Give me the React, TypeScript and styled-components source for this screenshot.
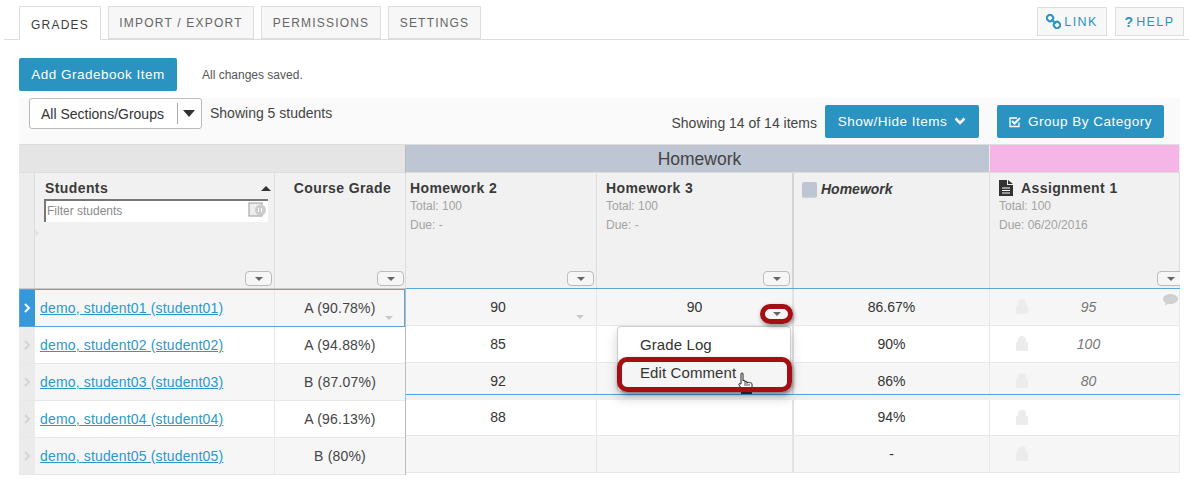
import React from "react";
import styled, { createGlobalStyle } from "styled-components";

const Global = createGlobalStyle`
  html, body { margin: 0; padding: 0; background: #fff; }
  body { font-family: "Liberation Sans", Arial, sans-serif; color: #333; width: 1189px; height: 481px; overflow: hidden; }
`;

const Page = styled.div`
  position: relative;
  width: 1189px;
  height: 481px;
  overflow: hidden;
`;

const TabBar = styled.div`
  height: 33px;
  margin: 6px 0 0 4px;
  padding: 0 5px 0 15px;
  border-bottom: 1px solid #ddd;
  display: flex;
  align-items: flex-start;
  gap: 7px;
`;

const Tab = styled.div<{ $active?: boolean; $w: number }>`
  box-sizing: border-box;
  width: ${(p) => p.$w}px;
  height: ${(p) => (p.$active ? 34 : 33)}px;
  border: 1px solid #ddd;
  border-bottom: ${(p) => (p.$active ? "none" : "1px solid #ddd")};
  background: ${(p) => (p.$active ? "#fff" : "#f7f7f7")};
  color: ${(p) => (p.$active ? "#3d3d3d" : "#666")};
  font-size: 12px;
  letter-spacing: 1.2px;
  display: flex;
  align-items: center;
  justify-content: center;
  padding-top: ${(p) => (p.$active ? 2 : 1)}px;
`;

const TabSpacer = styled.div`
  flex: 1;
`;

const LinkButton = styled.div<{ $w: number; $mr?: number }>`
  box-sizing: border-box;
  width: ${(p) => p.$w}px;
  height: 29px;
  margin-top: 1px;
  margin-right: ${(p) => p.$mr ?? 0}px;
  border: 1px solid #ddd;
  background: #f7f7f7;
  color: #2a93c1;
  font-size: 12.5px;
  letter-spacing: 1.4px;
  display: flex;
  align-items: center;
  justify-content: center;
  gap: 3px;
`;

const HelpMark = styled.b`
  font-size: 14px;
  letter-spacing: 0;
`;

const ActionRow = styled.div`
  display: flex;
  align-items: center;
  margin: 18px 0 0 19px;
  height: 33px;
`;

const Primary = styled.div<{ $w: number }>`
  box-sizing: border-box;
  width: ${(p) => p.$w}px;
  height: 33px;
  border-radius: 2px;
  background: #2a93c1;
  color: #fff;
  font-size: 13.5px;
  letter-spacing: 0.5px;
  display: flex;
  align-items: center;
  justify-content: center;
  gap: 7px;
`;

const Saved = styled.span`
  margin-left: 25px;
  font-size: 12px;
  color: #555;
`;

const Toolbar = styled.div`
  box-sizing: border-box;
  width: 1161px;
  height: 46px;
  margin: 7px 0 0 19px;
  padding: 0 16px 0 10px;
  background: #fafafa;
  display: flex;
  align-items: flex-start;
`;

const SectionSelect = styled.div`
  box-sizing: border-box;
  width: 173px;
  height: 31px;
  border: 1px solid #bbb;
  border-radius: 3px;
  background: #fff;
  display: flex;
  align-items: center;
  font-size: 14px;
  color: #333;
  padding-left: 11px;
`;

const SelectLabel = styled.span`
  width: 136px;
`;

const SelectDivider = styled.i`
  width: 1px;
  height: 21px;
  background: #aaa;
  margin-right: 5px;
`;

const SelectCaret = styled.i`
  width: 0;
  height: 0;
  border-left: 6px solid transparent;
  border-right: 6px solid transparent;
  border-top: 7px solid #333;
`;

const Showing = styled.span`
  margin: 7px 0 0 8px;
  font-size: 14px;
  color: #444;
`;

const ToolbarRight = styled.div`
  margin-left: auto;
  margin-top: 7px;
  display: flex;
  align-items: center;
`;

const ItemCount = styled.span`
  font-size: 14px;
  color: #444;
  margin: 0 8px 0 0;
  padding-top: 3px;
`;

const Spacer18 = styled.div`
  width: 18px;
`;

const Table = styled.div`
  width: 1161px;
  margin-left: 19px;
  height: 330px;
  display: grid;
  grid-template-columns: 387px 774px;
  border-top: 1px solid #ddd;
  box-sizing: border-box;
`;

const Pane = styled.div`
  display: flex;
  flex-direction: column;
  min-width: 0;
`;

const FrozenPane = styled(Pane)`
  border-right: 1px solid #bbb;
  box-sizing: border-box;
`;

const BlankGroup = styled.div`
  height: 27px;
  flex: none;
  background: #e5e5e5;
  border-bottom: 1px solid #ddd;
`;

const GroupRow = styled.div`
  display: flex;
  flex: none;
  height: 27px;
  border-bottom: 1px solid #ddd;
`;

const GroupCell = styled.div<{ $w: number; $bg: string }>`
  width: ${(p) => p.$w}px;
  background: ${(p) => p.$bg};
  color: #444;
  font-size: 17.5px;
  display: flex;
  align-items: center;
  justify-content: center;
  border-right: 1px solid #eee;
  box-sizing: border-box;
  padding: 1px 0 0 4px;
`;

const HeaderRow = styled.div`
  height: 115px;
  flex: none;
  display: flex;
  border-bottom: 2px solid #c9c9c9;
  background: #f1f1f1;
`;

const Gutter = styled.div`
  position: relative;
  width: 15px;
  flex: none;
  background: #ececec;
  border-right: 1px solid #ddd;
`;

const GutterMark = styled.i`
  position: absolute;
  right: -6px;
  top: 56px;
  border-top: 4px solid transparent;
  border-bottom: 4px solid transparent;
  border-left: 5px solid #e6e6e6;
`;

const Head = styled.div<{ $w: number; $thick?: boolean; $pad?: number }>`
  position: relative;
  box-sizing: border-box;
  width: ${(p) => p.$w}px;
  flex: none;
  padding: 7px 0 0 ${(p) => p.$pad ?? 5}px;
  border-right: ${(p) => (p.$thick ? "2px solid #d4d4d4" : "1px solid #ddd")};
`;

const HeadTitle = styled.div<{ $center?: boolean }>`
  font-size: 14px;
  font-weight: 700;
  letter-spacing: 0.4px;
  color: #3a3a3a;
  line-height: 16px;
  text-align: ${(p) => (p.$center ? "center" : "left")};
  display: flex;
  align-items: center;
  gap: 8px;
  justify-content: ${(p) => (p.$center ? "center" : "flex-start")};
`;

const HeadMeta = styled.div`
  font-size: 12px;
  color: #a3a3a3;
  line-height: 18px;
  margin-top: 1px;
`;

const CategoryTitle = styled.div`
  display: flex;
  align-items: center;
  gap: 4px;
  font-size: 14px;
  font-weight: 700;
  font-style: italic;
  color: #3a3a3a;
  padding: 1px 0 0 3px;
`;

const CategorySwatch = styled.i`
  width: 15px;
  height: 15px;
  border-radius: 2px;
  background: #bec5d3;
  box-shadow: 0 1px 1px rgba(0,0,0,.15);
`;

const SortCaret = styled.i`
  position: absolute;
  top: 13px;
  right: 3px;
  border-left: 5px solid transparent;
  border-right: 5px solid transparent;
  border-bottom: 5px solid #333;
`;

const FilterBox = styled.div`
  position: relative;
  box-sizing: border-box;
  width: 224px;
  height: 23px;
  margin: 3px 0 0 -1px;
  background: #fff;
  border-top: 2px solid #777;
  border-left: 2px solid #777;
  font-size: 12px;
  color: #8b8b8b;
  padding: 3px 0 0 1px;
`;

const FilterIcon = styled.svg`
  position: absolute;
  right: 1px;
  top: 1px;
`;

const MenuToggle = styled.div<{ $right: number }>`
  position: absolute;
  right: ${(p) => p.$right}px;
  bottom: 2px;
  box-sizing: border-box;
  width: 27px;
  height: 15px;
  border: 1px solid #bbb;
  border-radius: 4px;
  background: #f6f6f6;
  display: flex;
  align-items: center;
  justify-content: center;
`;

const TinyCaret = styled.i<{ $c?: string }>`
  border-left: 4px solid transparent;
  border-right: 4px solid transparent;
  border-top: 4px solid ${(p) => p.$c ?? "#666"};
`;

const ClipRight = styled.div`
  display: flex;
  flex: none;
  width: 774px;
  overflow: hidden;
  height: 115px;
  border-bottom: 2px solid #c9c9c9;
  background: #f1f1f1;
`;

const LeftRow = styled.div<{ $odd?: boolean; $sel?: boolean }>`
  height: ${(p) => (p.$sel ? 38 : 37)}px;
  flex: none;
  box-sizing: border-box;
  display: flex;
  background: ${(p) => (p.$odd ? "#f6f6f6" : "#fff")};
  border-bottom: 1px solid #e8e8e8;
  ${(p) => (p.$sel ? "outline: 1px solid #5ba4dd; outline-offset: -1px; margin-top:-1px; position:relative; z-index:1;" : "")}
`;

const RowGutter = styled.div<{ $sel?: boolean }>`
  width: 16px;
  flex: none;
  background: ${(p) => (p.$sel ? "#3498db" : "#ebebeb")};
  color: ${(p) => (p.$sel ? "#fff" : "#d4d4d4")};
  display: flex;
  align-items: center;
  justify-content: center;
`;

const NameCell = styled.div`
  box-sizing: border-box;
  width: 240px;
  flex: none;
  padding-left: 5px;
  border-right: 1px solid #e8e8e8;
  display: flex;
  align-items: center;
  font-size: 14px;
  color: #2a9ac9;
  text-decoration: underline;
  letter-spacing: 0.16px;
`;

const GradeCell = styled.div`
  position: relative;
  flex: 1;
  display: flex;
  align-items: center;
  justify-content: center;
  font-size: 14px;
  letter-spacing: 0.2px;
  color: #444;
`;

const RightRow = styled.div<{ $odd?: boolean; $sel?: boolean; $h: number }>`
  position: relative;
  box-sizing: border-box;
  flex: none;
  height: ${(p) => p.$h}px;
  display: flex;
  background: ${(p) => (p.$odd ? "#f6f6f6" : "#fff")};
  border-bottom: 1px solid #e8e8e8;
  border-top: ${(p) => (p.$sel ? "1px solid #5ba4dd" : "none")};
  ${(p) => (p.$sel ? "margin-top:-2px;" : "")}
`;

const SelectionEnd = styled.div`
  position: absolute;
  left: 0;
  right: 0;
  bottom: -1px;
  height: 6px;
  box-sizing: border-box;
  background: #f0f0f0;
  border-top: 1px solid #4fa3e3;
  z-index: 1;
`;

const ValueCell = styled.div<{ $w: number; $thick?: boolean; $it?: boolean; $pl?: number; $pr?: number }>`
  position: relative;
  box-sizing: border-box;
  width: ${(p) => p.$w}px;
  flex: none;
  border-right: ${(p) => (p.$thick ? "2px solid #e2e2e2" : "1px solid #e8e8e8")};
  display: flex;
  align-items: center;
  justify-content: center;
  font-size: 14px;
  color: ${(p) => (p.$it ? "#777" : "#333")};
  font-style: ${(p) => (p.$it ? "italic" : "normal")};
  padding: 0 ${(p) => p.$pr ?? 0}px 1px ${(p) => p.$pl ?? 0}px;
`;

const CellCaret = styled.span<{ $b: number }>`
  position: absolute;
  right: 12px;
  bottom: ${(p) => p.$b}px;
  display: flex;
`;

const LockSpot = styled.span`
  position: absolute;
  left: 26px;
  top: 50%;
  margin-top: -8px;
  color: #ececec;
  display: flex;
`;

const CommentSpot = styled.span`
  position: absolute;
  right: 1px;
  top: 5px;
  color: #d0d0d0;
  display: flex;
`;

const Menu = styled.div`
  position: absolute;
  left: 617px;
  top: 326px;
  box-sizing: border-box;
  width: 174px;
  height: 66px;
  background: #fff;
  border: 1px solid #ccc;
  border-radius: 4px;
  box-shadow: 0 6px 12px rgba(0,0,0,.18);
  z-index: 5;
  padding-top: 4px;
  font-size: 15px;
  letter-spacing: 0.1px;
  color: #333;
`;

const MenuItem = styled.div<{ $hover?: boolean }>`
  height: 28px;
  line-height: 28px;
  padding-left: 22px;
  background: ${(p) => (p.$hover ? "#f5f5f5" : "#fff")};
`;

const Ring = styled.div<{ $l: number; $t: number; $w: number; $h: number; $r: number }>`
  position: absolute;
  left: ${(p) => p.$l}px;
  top: ${(p) => p.$t}px;
  width: ${(p) => p.$w}px;
  height: ${(p) => p.$h}px;
  box-sizing: border-box;
  border: 5px solid #a50f14;
  border-radius: ${(p) => p.$r}px;
  box-shadow: 1px 2px 4px rgba(0,0,0,.45);
  z-index: 7;
  display: flex;
  align-items: center;
  justify-content: center;
`;

const Cursor = styled.svg`
  position: absolute;
  left: 737px;
  top: 372px;
  z-index: 6;
`;

const Chevron = ({ size = 8 }: { size?: number }) => (
  <svg width={size} height={size + 2} viewBox="0 0 8 10" fill="none" stroke="currentColor" strokeWidth="2">
    <path d="M2 1l4 4-4 4" />
  </svg>
);

const Lock = () => (
  <svg width="12" height="15" viewBox="0 0 12 15" fill="currentColor">
    <path d="M2 6V4a4 4 0 0 1 8 0v2h1a1 1 0 0 1 1 1v7a1 1 0 0 1-1 1H1a1 1 0 0 1-1-1V7a1 1 0 0 1 1-1z" />
  </svg>
);

const Doc = () => (
  <svg width="14" height="16" viewBox="0 0 14 16">
    <path d="M0 0h8v5h6v11H0z" fill="#333" />
    <path d="M9 0l5 4H9z" fill="#333" />
    <path d="M3 8h8M3 10.5h8M3 13h8" stroke="#fff" strokeWidth="1" />
  </svg>
);

const columns = [
  { w: 191, pad: 4, title: "Homework 2", total: "Total: 100", due: "Due: -" },
  { w: 197, pad: 9, title: "Homework 3", total: "Total: 100", due: "Due: -", thick: true },
];

const students = [
  { n: "demo, student01 (student01)", g: "A (90.78%)" },
  { n: "demo, student02 (student02)", g: "A (94.88%)" },
  { n: "demo, student03 (student03)", g: "B (87.07%)" },
  { n: "demo, student04 (student04)", g: "A (96.13%)" },
  { n: "demo, student05 (student05)", g: "B (80%)" },
];

const rightRows = [
  { h: 38, a: "90", b: "90", c: "86.67%", d: "95", sel: true, odd: true },
  { h: 37, a: "85", b: "", c: "90%", d: "100", odd: false },
  { h: 37, a: "92", b: "", c: "86%", d: "80", odd: true, end: true },
  { h: 36, a: "88", b: "", c: "94%", d: "", odd: false },
  { h: 37, a: "", b: "", c: "-", d: "", odd: true },
];

export default function App() {
  return (
    <Page>
      <Global />
      <TabBar>
        <Tab $active $w={82}>GRADES</Tab>
        <Tab $w={146}>IMPORT / EXPORT</Tab>
        <Tab $w={120}>PERMISSIONS</Tab>
        <Tab $w={93}>SETTINGS</Tab>
        <TabSpacer />
        <LinkButton $w={70} $mr={1}>
          <svg width="15" height="15" viewBox="0 0 15 15" fill="none" stroke="#2a93c1" strokeWidth="2">
            <rect x="1" y="1" width="6" height="6" rx="2.5" transform="rotate(45 4 4)" />
            <rect x="8" y="8" width="6" height="6" rx="2.5" transform="rotate(45 11 11)" />
            <path d="M5.500 5.500l4 4" />
          </svg>
          LINK
        </LinkButton>
        <LinkButton $w={69}>
          <HelpMark>?</HelpMark>HELP
        </LinkButton>
      </TabBar>

      <ActionRow>
        <Primary $w={158}>Add Gradebook Item</Primary>
        <Saved>All changes saved.</Saved>
      </ActionRow>

      <Toolbar>
        <SectionSelect>
          <SelectLabel>All Sections/Groups</SelectLabel>
          <SelectDivider />
          <SelectCaret />
        </SectionSelect>
        <Showing>Showing 5 students</Showing>
        <ToolbarRight>
          <ItemCount>Showing 14 of 14 items</ItemCount>
          <Primary $w={154}>
            Show/Hide Items
            <svg width="12" height="9" viewBox="0 0 12 9" fill="none" stroke="#fff" strokeWidth="2.6">
              <path d="M1.500 1.500L6 6l4.500-4.500" />
            </svg>
          </Primary>
          <Spacer18 />
          <Primary $w={167}>
            <svg width="12" height="12" viewBox="0 0 12 12" fill="none" stroke="#fff" strokeWidth="1.3">
              <path d="M10 6.500V10.500H1V2h7" />
              <path d="M3 5l2.500 2.500L11 2" strokeWidth="2" />
            </svg>
            Group By Category
          </Primary>
        </ToolbarRight>
      </Toolbar>

      <Table>
        <FrozenPane>
          <BlankGroup />
          <HeaderRow>
            <Gutter><GutterMark /></Gutter>
            <Head $w={240} $pad={10}>
              <HeadTitle>Students</HeadTitle>
              <SortCaret />
              <FilterBox>
                Filter students
                <FilterIcon width="19" height="15" viewBox="0 0 19 15">
                  <rect x="1" y="1" width="13" height="13" fill="#eee" stroke="#999" />
                  <circle cx="12.500" cy="8" r="5.500" fill="#ccc" />
                  <path d="M10.500 6v4M13.500 6v4" stroke="#fff" />
                </FilterIcon>
              </FilterBox>
              <MenuToggle $right={2}><TinyCaret /></MenuToggle>
            </Head>
            <Head $w={131}>
              <HeadTitle $center>Course Grade</HeadTitle>
              <MenuToggle $right={1}><TinyCaret /></MenuToggle>
            </Head>
          </HeaderRow>
          {students.map((s, i) => (
            <LeftRow key={s.n} $odd={i % 2 === 0} $sel={i === 0}>
              <RowGutter $sel={i === 0}><Chevron /></RowGutter>
              <NameCell>{s.n}</NameCell>
              <GradeCell>
                {s.g}
                {i === 0 && <CellCaret $b={6}><TinyCaret $c="#c9c9c9" /></CellCaret>}
              </GradeCell>
            </LeftRow>
          ))}
        </FrozenPane>

        <Pane>
          <GroupRow>
            <GroupCell $w={584} $bg="#bec5d3">Homework</GroupCell>
            <GroupCell $w={190} $bg="#f6b5e7" />
          </GroupRow>
          <ClipRight>
            {columns.map((c) => (
              <Head key={c.title} $w={c.w} $thick={c.thick} $pad={c.pad}>
                <HeadTitle>{c.title}</HeadTitle>
                <HeadMeta>{c.total}</HeadMeta>
                <HeadMeta>{c.due}</HeadMeta>
                <MenuToggle $right={2}><TinyCaret /></MenuToggle>
              </Head>
            ))}
            <Head $w={196}>
              <CategoryTitle><CategorySwatch />Homework</CategoryTitle>
            </Head>
            <Head $w={190} $pad={9}>
              <HeadTitle><Doc />Assignment 1</HeadTitle>
              <HeadMeta>Total: 100</HeadMeta>
              <HeadMeta>Due: 06/20/2016</HeadMeta>
              <MenuToggle $right={-5}><TinyCaret /></MenuToggle>
            </Head>
          </ClipRight>
          {rightRows.map((r, i) => (
            <RightRow key={i} $h={r.h} $odd={r.odd} $sel={r.sel}>
              <ValueCell $w={191} $pr={6}>
                {r.a}
                {i === 0 && <CellCaret $b={6}><TinyCaret $c="#c9c9c9" /></CellCaret>}
              </ValueCell>
              <ValueCell $w={197} $thick>{r.b}</ValueCell>
              <ValueCell $w={196}>{r.c}</ValueCell>
              <ValueCell $w={190} $it $pl={8}>
                <LockSpot><Lock /></LockSpot>
                {r.d}
                {i === 0 && (
                  <CommentSpot>
                    <svg width="15" height="12" viewBox="0 0 15 12" fill="currentColor">
                      <path d="M7.500 0C3.400 0 0 2.200 0 5c0 1.600 1.100 3 2.800 3.900-.2.900-.7 1.700-1.300 2.600 1.500-.2 2.800-.9 3.800-1.700.7.100 1.400.2 2.200.2 4.100 0 7.500-2.200 7.500-5S11.600 0 7.500 0z" />
                    </svg>
                  </CommentSpot>
                )}
              </ValueCell>
              {r.end && <SelectionEnd />}
            </RightRow>
          ))}
        </Pane>
      </Table>

      <Menu>
        <MenuItem>Grade Log</MenuItem>
        <MenuItem $hover>Edit Comment</MenuItem>
      </Menu>
      <Ring $l={760} $t={304} $w={33} $h={20} $r={10}><TinyCaret /></Ring>
      <Ring $l={617} $t={357} $w={175} $h={35} $r={10} />
      <Cursor width="17" height="22" viewBox="0 0 17 22">
        <path d="M4 2c0-1.500 2-1.500 2 0v7c0-1 2-1 2 0v1c0-1 2-1 2 0v1c0-1 2-1 2 0 0-.5 3-.5 3 1v3l-1 4H6l-4-6c-.7-1.200.8-2 1.700-1L4 12z" fill="#fff" stroke="#222" strokeWidth="1" />
        <path d="M8 10v4M10 11v3M12 12v2" stroke="#222" strokeWidth=".8" />
        <rect x="4" y="20" width="11" height="2" fill="#333" />
      </Cursor>
    </Page>
  );
}
